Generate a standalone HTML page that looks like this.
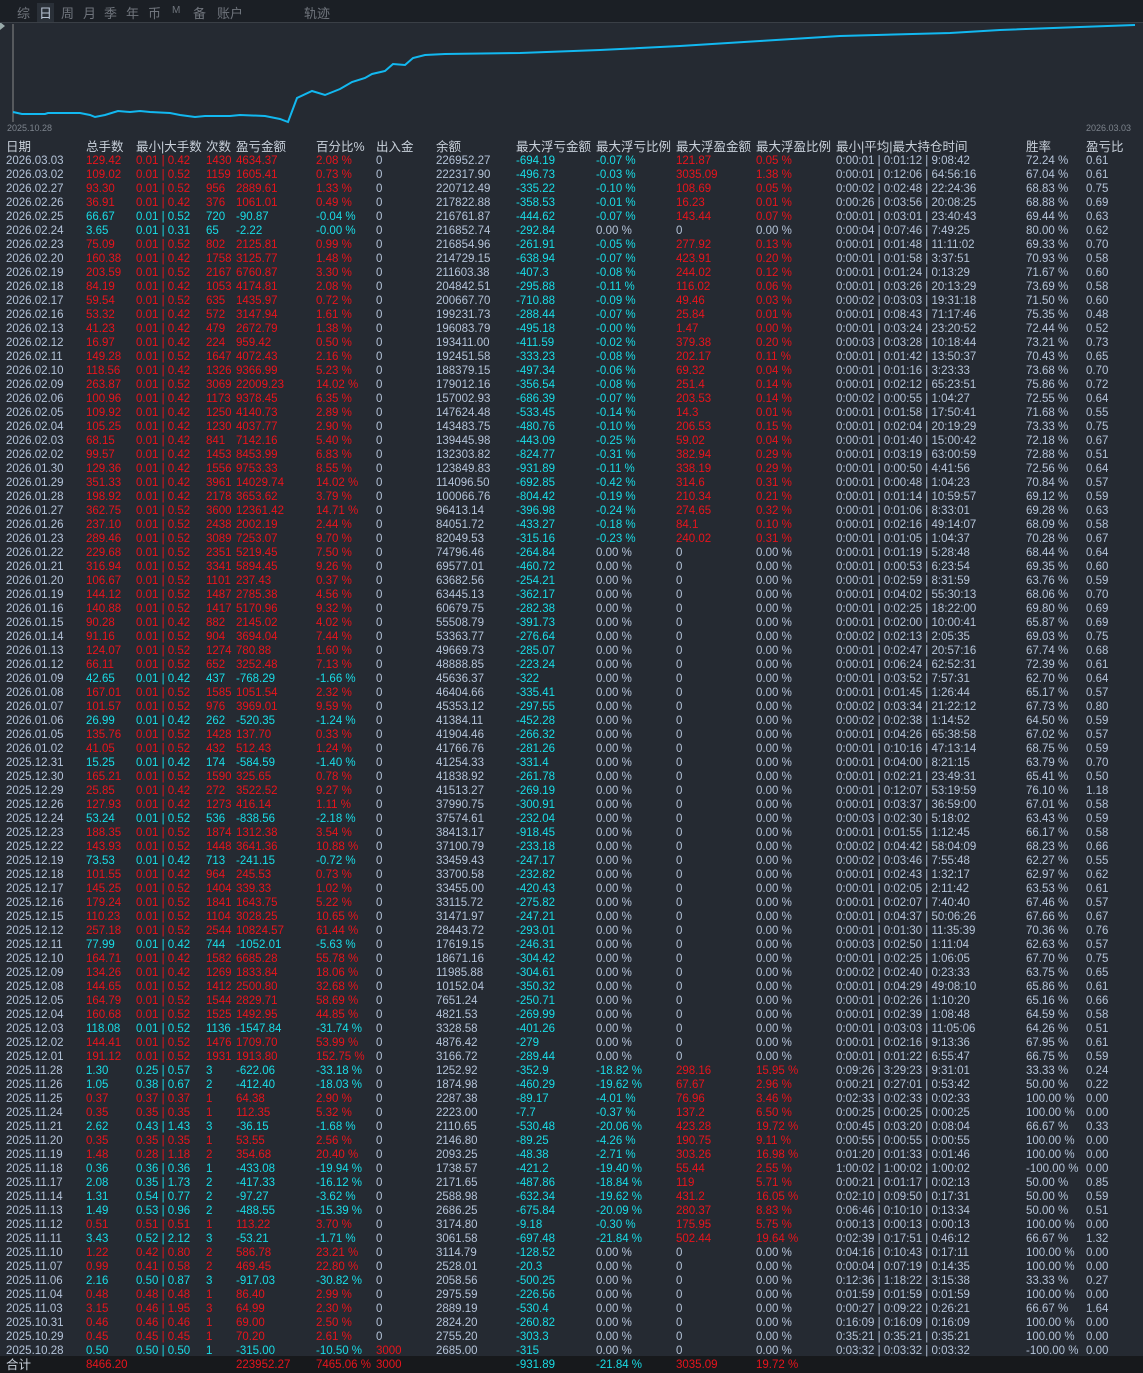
<!DOCTYPE html>
<html><head><meta charset="utf-8"><style>
body{margin:0;width:1143px;height:1373px;background:#252a32;overflow:hidden;font-family:"Liberation Sans","Noto Sans CJK SC",sans-serif;position:relative}
.top{position:absolute;left:0;top:0;width:1143px;height:22px;background:#1b1f25;color:#70757d;font-size:13px}
.top span{position:absolute;top:3px}
.tab{background:#2a3038;color:#b8c4d4}
.chart{position:absolute;left:0;top:22px;width:1143px;height:116px}
.dl{position:absolute;font-size:9px;color:#7d848d;top:123px}
table{position:absolute;left:0;top:140px;border-collapse:collapse;table-layout:fixed;font-size:11.5px;color:#b4c3d8}
td{padding:0;height:14px;line-height:14px;white-space:nowrap;overflow:visible}
tr.h td{font-size:12.5px;color:#c8d0da}
tr.p td:nth-child(n+2):nth-child(-n+6){color:#e8141c}
tr.n td:nth-child(n+2):nth-child(-n+6){color:#19dce6}
td:nth-child(9),td:nth-child(10){color:#19dce6}
td:nth-child(11),td:nth-child(12){color:#e8141c}
tr td.g{color:#b4c3d8}
tr td.r{color:#e8141c}
.foot{position:absolute;left:0;top:1356px;width:1143px;height:17px;background:#17191c}
</style></head><body>
<div class="top"><span style="left:17px">综</span><span class="tab" style="left:37px;padding:0 2px">日</span><span style="left:61px">周</span><span style="left:83px">月</span><span style="left:104px">季</span><span style="left:126px">年</span><span style="left:148px">币</span><span style="left:172px;font-size:10px;top:5px">M</span><span style="left:193px">备</span><span style="left:217px">账户</span><span style="left:304px">轨迹</span></div>
<div class="chart"><svg width="1143" height="116"><polygon points="0,0 5,4 0,8" fill="#9aa"/><line x1="13" y1="2" x2="13" y2="100" stroke="#888" stroke-width="1"/><line x1="0" y1="0.5" x2="1143" y2="0.5" stroke="#3a3f46"/>
<polyline fill="none" stroke="#12b8f0" stroke-width="2" points="13,90 22,92 45,92 48,91 80,91 90,93 95,95 105,93 118,89 130,90 140,89 150,90 170,91 180,93 195,95 205,94 230,94 240,93 265,94 280,97 288,100 297,76 312,69 325,73 340,67 352,60 365,56 372,52 385,49 393,42 405,43 413,36 425,33 445,32 520,31 600,28 680,24 760,19 840,14 950,11 1000,8 1080,5 1135,3"/></svg></div>
<div class="dl" style="left:7px">2025.10.28</div><div class="dl" style="left:1086px">2026.03.03</div>
<div class="foot"></div>
<table>
<colgroup><col style="width:86px"><col style="width:50px"><col style="width:70px"><col style="width:30px"><col style="width:80px"><col style="width:60px"><col style="width:60px"><col style="width:80px"><col style="width:80px"><col style="width:80px"><col style="width:80px"><col style="width:80px"><col style="width:190px"><col style="width:60px"><col style="width:57px"></colgroup>
<tr class="h"><td style="padding-left:6px">日期</td><td>总手数</td><td>最小|大手数</td><td>次数</td><td>盈亏金额</td><td>百分比%</td><td>出入金</td><td>余额</td><td style="color:#c8d0da">最大浮亏金额</td><td style="color:#c8d0da">最大浮亏比例</td><td style="color:#c8d0da">最大浮盈金额</td><td style="color:#c8d0da">最大浮盈比例</td><td>最小|平均|最大持仓时间</td><td>胜率</td><td>盈亏比</td></tr>
<tr class="p"><td style="padding-left:6px">2026.03.03</td><td>129.42</td><td>0.01 | 0.42</td><td>1430</td><td>4634.37</td><td>2.08 %</td><td>0</td><td>226952.27</td><td>-694.19</td><td>-0.07 %</td><td>121.87</td><td>0.05 %</td><td>0:00:01 | 0:01:12 | 9:08:42</td><td>72.24 %</td><td>0.61</td></tr>
<tr class="p"><td style="padding-left:6px">2026.03.02</td><td>109.02</td><td>0.01 | 0.52</td><td>1159</td><td>1605.41</td><td>0.73 %</td><td>0</td><td>222317.90</td><td>-496.73</td><td>-0.03 %</td><td>3035.09</td><td>1.38 %</td><td>0:00:01 | 0:12:06 | 64:56:16</td><td>67.04 %</td><td>0.61</td></tr>
<tr class="p"><td style="padding-left:6px">2026.02.27</td><td>93.30</td><td>0.01 | 0.52</td><td>956</td><td>2889.61</td><td>1.33 %</td><td>0</td><td>220712.49</td><td>-335.22</td><td>-0.10 %</td><td>108.69</td><td>0.05 %</td><td>0:00:02 | 0:02:48 | 22:24:36</td><td>68.83 %</td><td>0.75</td></tr>
<tr class="p"><td style="padding-left:6px">2026.02.26</td><td>36.91</td><td>0.01 | 0.42</td><td>376</td><td>1061.01</td><td>0.49 %</td><td>0</td><td>217822.88</td><td>-358.53</td><td>-0.01 %</td><td>16.23</td><td>0.01 %</td><td>0:00:26 | 0:03:56 | 20:08:25</td><td>68.88 %</td><td>0.69</td></tr>
<tr class="n"><td style="padding-left:6px">2026.02.25</td><td>66.67</td><td>0.01 | 0.52</td><td>720</td><td>-90.87</td><td>-0.04 %</td><td>0</td><td>216761.87</td><td>-444.62</td><td>-0.07 %</td><td>143.44</td><td>0.07 %</td><td>0:00:01 | 0:03:01 | 23:40:43</td><td>69.44 %</td><td>0.63</td></tr>
<tr class="n"><td style="padding-left:6px">2026.02.24</td><td>3.65</td><td>0.01 | 0.31</td><td>65</td><td>-2.22</td><td>-0.00 %</td><td>0</td><td>216852.74</td><td>-292.84</td><td class="g">0.00 %</td><td class="g">0</td><td class="g">0.00 %</td><td>0:00:04 | 0:07:46 | 7:49:25</td><td>80.00 %</td><td>0.62</td></tr>
<tr class="p"><td style="padding-left:6px">2026.02.23</td><td>75.09</td><td>0.01 | 0.52</td><td>802</td><td>2125.81</td><td>0.99 %</td><td>0</td><td>216854.96</td><td>-261.91</td><td>-0.05 %</td><td>277.92</td><td>0.13 %</td><td>0:00:01 | 0:01:48 | 11:11:02</td><td>69.33 %</td><td>0.70</td></tr>
<tr class="p"><td style="padding-left:6px">2026.02.20</td><td>160.38</td><td>0.01 | 0.42</td><td>1758</td><td>3125.77</td><td>1.48 %</td><td>0</td><td>214729.15</td><td>-638.94</td><td>-0.07 %</td><td>423.91</td><td>0.20 %</td><td>0:00:01 | 0:01:58 | 3:37:51</td><td>70.93 %</td><td>0.58</td></tr>
<tr class="p"><td style="padding-left:6px">2026.02.19</td><td>203.59</td><td>0.01 | 0.52</td><td>2167</td><td>6760.87</td><td>3.30 %</td><td>0</td><td>211603.38</td><td>-407.3</td><td>-0.08 %</td><td>244.02</td><td>0.12 %</td><td>0:00:01 | 0:01:24 | 0:13:29</td><td>71.67 %</td><td>0.60</td></tr>
<tr class="p"><td style="padding-left:6px">2026.02.18</td><td>84.19</td><td>0.01 | 0.42</td><td>1053</td><td>4174.81</td><td>2.08 %</td><td>0</td><td>204842.51</td><td>-295.88</td><td>-0.11 %</td><td>116.02</td><td>0.06 %</td><td>0:00:01 | 0:03:26 | 20:13:29</td><td>73.69 %</td><td>0.58</td></tr>
<tr class="p"><td style="padding-left:6px">2026.02.17</td><td>59.54</td><td>0.01 | 0.52</td><td>635</td><td>1435.97</td><td>0.72 %</td><td>0</td><td>200667.70</td><td>-710.88</td><td>-0.09 %</td><td>49.46</td><td>0.03 %</td><td>0:00:02 | 0:03:03 | 19:31:18</td><td>71.50 %</td><td>0.60</td></tr>
<tr class="p"><td style="padding-left:6px">2026.02.16</td><td>53.32</td><td>0.01 | 0.42</td><td>572</td><td>3147.94</td><td>1.61 %</td><td>0</td><td>199231.73</td><td>-288.44</td><td>-0.07 %</td><td>25.84</td><td>0.01 %</td><td>0:00:01 | 0:08:43 | 71:17:46</td><td>75.35 %</td><td>0.48</td></tr>
<tr class="p"><td style="padding-left:6px">2026.02.13</td><td>41.23</td><td>0.01 | 0.42</td><td>479</td><td>2672.79</td><td>1.38 %</td><td>0</td><td>196083.79</td><td>-495.18</td><td>-0.00 %</td><td>1.47</td><td>0.00 %</td><td>0:00:01 | 0:03:24 | 23:20:52</td><td>72.44 %</td><td>0.52</td></tr>
<tr class="p"><td style="padding-left:6px">2026.02.12</td><td>16.97</td><td>0.01 | 0.42</td><td>224</td><td>959.42</td><td>0.50 %</td><td>0</td><td>193411.00</td><td>-411.59</td><td>-0.02 %</td><td>379.38</td><td>0.20 %</td><td>0:00:03 | 0:03:28 | 10:18:44</td><td>73.21 %</td><td>0.73</td></tr>
<tr class="p"><td style="padding-left:6px">2026.02.11</td><td>149.28</td><td>0.01 | 0.52</td><td>1647</td><td>4072.43</td><td>2.16 %</td><td>0</td><td>192451.58</td><td>-333.23</td><td>-0.08 %</td><td>202.17</td><td>0.11 %</td><td>0:00:01 | 0:01:42 | 13:50:37</td><td>70.43 %</td><td>0.65</td></tr>
<tr class="p"><td style="padding-left:6px">2026.02.10</td><td>118.56</td><td>0.01 | 0.42</td><td>1326</td><td>9366.99</td><td>5.23 %</td><td>0</td><td>188379.15</td><td>-497.34</td><td>-0.06 %</td><td>69.32</td><td>0.04 %</td><td>0:00:01 | 0:01:16 | 3:23:33</td><td>73.68 %</td><td>0.70</td></tr>
<tr class="p"><td style="padding-left:6px">2026.02.09</td><td>263.87</td><td>0.01 | 0.52</td><td>3069</td><td>22009.23</td><td>14.02 %</td><td>0</td><td>179012.16</td><td>-356.54</td><td>-0.08 %</td><td>251.4</td><td>0.14 %</td><td>0:00:01 | 0:02:12 | 65:23:51</td><td>75.86 %</td><td>0.72</td></tr>
<tr class="p"><td style="padding-left:6px">2026.02.06</td><td>100.96</td><td>0.01 | 0.42</td><td>1173</td><td>9378.45</td><td>6.35 %</td><td>0</td><td>157002.93</td><td>-686.39</td><td>-0.07 %</td><td>203.53</td><td>0.14 %</td><td>0:00:02 | 0:00:55 | 1:04:27</td><td>72.55 %</td><td>0.64</td></tr>
<tr class="p"><td style="padding-left:6px">2026.02.05</td><td>109.92</td><td>0.01 | 0.42</td><td>1250</td><td>4140.73</td><td>2.89 %</td><td>0</td><td>147624.48</td><td>-533.45</td><td>-0.14 %</td><td>14.3</td><td>0.01 %</td><td>0:00:01 | 0:01:58 | 17:50:41</td><td>71.68 %</td><td>0.55</td></tr>
<tr class="p"><td style="padding-left:6px">2026.02.04</td><td>105.25</td><td>0.01 | 0.42</td><td>1230</td><td>4037.77</td><td>2.90 %</td><td>0</td><td>143483.75</td><td>-480.76</td><td>-0.10 %</td><td>206.53</td><td>0.15 %</td><td>0:00:01 | 0:02:04 | 20:19:29</td><td>73.33 %</td><td>0.75</td></tr>
<tr class="p"><td style="padding-left:6px">2026.02.03</td><td>68.15</td><td>0.01 | 0.42</td><td>841</td><td>7142.16</td><td>5.40 %</td><td>0</td><td>139445.98</td><td>-443.09</td><td>-0.25 %</td><td>59.02</td><td>0.04 %</td><td>0:00:01 | 0:01:40 | 15:00:42</td><td>72.18 %</td><td>0.67</td></tr>
<tr class="p"><td style="padding-left:6px">2026.02.02</td><td>99.57</td><td>0.01 | 0.42</td><td>1453</td><td>8453.99</td><td>6.83 %</td><td>0</td><td>132303.82</td><td>-824.77</td><td>-0.31 %</td><td>382.94</td><td>0.29 %</td><td>0:00:01 | 0:03:19 | 63:00:59</td><td>72.88 %</td><td>0.51</td></tr>
<tr class="p"><td style="padding-left:6px">2026.01.30</td><td>129.36</td><td>0.01 | 0.42</td><td>1556</td><td>9753.33</td><td>8.55 %</td><td>0</td><td>123849.83</td><td>-931.89</td><td>-0.11 %</td><td>338.19</td><td>0.29 %</td><td>0:00:01 | 0:00:50 | 4:41:56</td><td>72.56 %</td><td>0.64</td></tr>
<tr class="p"><td style="padding-left:6px">2026.01.29</td><td>351.33</td><td>0.01 | 0.42</td><td>3961</td><td>14029.74</td><td>14.02 %</td><td>0</td><td>114096.50</td><td>-692.85</td><td>-0.42 %</td><td>314.6</td><td>0.31 %</td><td>0:00:01 | 0:00:48 | 1:04:23</td><td>70.84 %</td><td>0.57</td></tr>
<tr class="p"><td style="padding-left:6px">2026.01.28</td><td>198.92</td><td>0.01 | 0.42</td><td>2178</td><td>3653.62</td><td>3.79 %</td><td>0</td><td>100066.76</td><td>-804.42</td><td>-0.19 %</td><td>210.34</td><td>0.21 %</td><td>0:00:01 | 0:01:14 | 10:59:57</td><td>69.12 %</td><td>0.59</td></tr>
<tr class="p"><td style="padding-left:6px">2026.01.27</td><td>362.75</td><td>0.01 | 0.52</td><td>3600</td><td>12361.42</td><td>14.71 %</td><td>0</td><td>96413.14</td><td>-396.98</td><td>-0.24 %</td><td>274.65</td><td>0.32 %</td><td>0:00:01 | 0:01:06 | 8:33:01</td><td>69.28 %</td><td>0.63</td></tr>
<tr class="p"><td style="padding-left:6px">2026.01.26</td><td>237.10</td><td>0.01 | 0.52</td><td>2438</td><td>2002.19</td><td>2.44 %</td><td>0</td><td>84051.72</td><td>-433.27</td><td>-0.18 %</td><td>84.1</td><td>0.10 %</td><td>0:00:01 | 0:02:16 | 49:14:07</td><td>68.09 %</td><td>0.58</td></tr>
<tr class="p"><td style="padding-left:6px">2026.01.23</td><td>289.46</td><td>0.01 | 0.52</td><td>3089</td><td>7253.07</td><td>9.70 %</td><td>0</td><td>82049.53</td><td>-315.16</td><td>-0.23 %</td><td>240.02</td><td>0.31 %</td><td>0:00:01 | 0:01:05 | 1:04:37</td><td>70.28 %</td><td>0.67</td></tr>
<tr class="p"><td style="padding-left:6px">2026.01.22</td><td>229.68</td><td>0.01 | 0.52</td><td>2351</td><td>5219.45</td><td>7.50 %</td><td>0</td><td>74796.46</td><td>-264.84</td><td class="g">0.00 %</td><td class="g">0</td><td class="g">0.00 %</td><td>0:00:01 | 0:01:19 | 5:28:48</td><td>68.44 %</td><td>0.64</td></tr>
<tr class="p"><td style="padding-left:6px">2026.01.21</td><td>316.94</td><td>0.01 | 0.52</td><td>3341</td><td>5894.45</td><td>9.26 %</td><td>0</td><td>69577.01</td><td>-460.72</td><td class="g">0.00 %</td><td class="g">0</td><td class="g">0.00 %</td><td>0:00:01 | 0:00:53 | 6:23:54</td><td>69.35 %</td><td>0.60</td></tr>
<tr class="p"><td style="padding-left:6px">2026.01.20</td><td>106.67</td><td>0.01 | 0.52</td><td>1101</td><td>237.43</td><td>0.37 %</td><td>0</td><td>63682.56</td><td>-254.21</td><td class="g">0.00 %</td><td class="g">0</td><td class="g">0.00 %</td><td>0:00:01 | 0:02:59 | 8:31:59</td><td>63.76 %</td><td>0.59</td></tr>
<tr class="p"><td style="padding-left:6px">2026.01.19</td><td>144.12</td><td>0.01 | 0.52</td><td>1487</td><td>2785.38</td><td>4.56 %</td><td>0</td><td>63445.13</td><td>-362.17</td><td class="g">0.00 %</td><td class="g">0</td><td class="g">0.00 %</td><td>0:00:01 | 0:04:02 | 55:30:13</td><td>68.06 %</td><td>0.70</td></tr>
<tr class="p"><td style="padding-left:6px">2026.01.16</td><td>140.88</td><td>0.01 | 0.52</td><td>1417</td><td>5170.96</td><td>9.32 %</td><td>0</td><td>60679.75</td><td>-282.38</td><td class="g">0.00 %</td><td class="g">0</td><td class="g">0.00 %</td><td>0:00:01 | 0:02:25 | 18:22:00</td><td>69.80 %</td><td>0.69</td></tr>
<tr class="p"><td style="padding-left:6px">2026.01.15</td><td>90.28</td><td>0.01 | 0.42</td><td>882</td><td>2145.02</td><td>4.02 %</td><td>0</td><td>55508.79</td><td>-391.73</td><td class="g">0.00 %</td><td class="g">0</td><td class="g">0.00 %</td><td>0:00:01 | 0:02:00 | 10:00:41</td><td>65.87 %</td><td>0.69</td></tr>
<tr class="p"><td style="padding-left:6px">2026.01.14</td><td>91.16</td><td>0.01 | 0.52</td><td>904</td><td>3694.04</td><td>7.44 %</td><td>0</td><td>53363.77</td><td>-276.64</td><td class="g">0.00 %</td><td class="g">0</td><td class="g">0.00 %</td><td>0:00:02 | 0:02:13 | 2:05:35</td><td>69.03 %</td><td>0.75</td></tr>
<tr class="p"><td style="padding-left:6px">2026.01.13</td><td>124.07</td><td>0.01 | 0.52</td><td>1274</td><td>780.88</td><td>1.60 %</td><td>0</td><td>49669.73</td><td>-285.07</td><td class="g">0.00 %</td><td class="g">0</td><td class="g">0.00 %</td><td>0:00:01 | 0:02:47 | 20:57:16</td><td>67.74 %</td><td>0.68</td></tr>
<tr class="p"><td style="padding-left:6px">2026.01.12</td><td>66.11</td><td>0.01 | 0.52</td><td>652</td><td>3252.48</td><td>7.13 %</td><td>0</td><td>48888.85</td><td>-223.24</td><td class="g">0.00 %</td><td class="g">0</td><td class="g">0.00 %</td><td>0:00:01 | 0:06:24 | 62:52:31</td><td>72.39 %</td><td>0.61</td></tr>
<tr class="n"><td style="padding-left:6px">2026.01.09</td><td>42.65</td><td>0.01 | 0.42</td><td>437</td><td>-768.29</td><td>-1.66 %</td><td>0</td><td>45636.37</td><td>-322</td><td class="g">0.00 %</td><td class="g">0</td><td class="g">0.00 %</td><td>0:00:01 | 0:03:52 | 7:57:31</td><td>62.70 %</td><td>0.64</td></tr>
<tr class="p"><td style="padding-left:6px">2026.01.08</td><td>167.01</td><td>0.01 | 0.52</td><td>1585</td><td>1051.54</td><td>2.32 %</td><td>0</td><td>46404.66</td><td>-335.41</td><td class="g">0.00 %</td><td class="g">0</td><td class="g">0.00 %</td><td>0:00:01 | 0:01:45 | 1:26:44</td><td>65.17 %</td><td>0.57</td></tr>
<tr class="p"><td style="padding-left:6px">2026.01.07</td><td>101.57</td><td>0.01 | 0.52</td><td>976</td><td>3969.01</td><td>9.59 %</td><td>0</td><td>45353.12</td><td>-297.55</td><td class="g">0.00 %</td><td class="g">0</td><td class="g">0.00 %</td><td>0:00:02 | 0:03:34 | 21:22:12</td><td>67.73 %</td><td>0.80</td></tr>
<tr class="n"><td style="padding-left:6px">2026.01.06</td><td>26.99</td><td>0.01 | 0.42</td><td>262</td><td>-520.35</td><td>-1.24 %</td><td>0</td><td>41384.11</td><td>-452.28</td><td class="g">0.00 %</td><td class="g">0</td><td class="g">0.00 %</td><td>0:00:02 | 0:02:38 | 1:14:52</td><td>64.50 %</td><td>0.59</td></tr>
<tr class="p"><td style="padding-left:6px">2026.01.05</td><td>135.76</td><td>0.01 | 0.52</td><td>1428</td><td>137.70</td><td>0.33 %</td><td>0</td><td>41904.46</td><td>-266.32</td><td class="g">0.00 %</td><td class="g">0</td><td class="g">0.00 %</td><td>0:00:01 | 0:04:26 | 65:38:58</td><td>67.02 %</td><td>0.57</td></tr>
<tr class="p"><td style="padding-left:6px">2026.01.02</td><td>41.05</td><td>0.01 | 0.52</td><td>432</td><td>512.43</td><td>1.24 %</td><td>0</td><td>41766.76</td><td>-281.26</td><td class="g">0.00 %</td><td class="g">0</td><td class="g">0.00 %</td><td>0:00:01 | 0:10:16 | 47:13:14</td><td>68.75 %</td><td>0.59</td></tr>
<tr class="n"><td style="padding-left:6px">2025.12.31</td><td>15.25</td><td>0.01 | 0.42</td><td>174</td><td>-584.59</td><td>-1.40 %</td><td>0</td><td>41254.33</td><td>-331.4</td><td class="g">0.00 %</td><td class="g">0</td><td class="g">0.00 %</td><td>0:00:01 | 0:04:00 | 8:21:15</td><td>63.79 %</td><td>0.70</td></tr>
<tr class="p"><td style="padding-left:6px">2025.12.30</td><td>165.21</td><td>0.01 | 0.52</td><td>1590</td><td>325.65</td><td>0.78 %</td><td>0</td><td>41838.92</td><td>-261.78</td><td class="g">0.00 %</td><td class="g">0</td><td class="g">0.00 %</td><td>0:00:01 | 0:02:21 | 23:49:31</td><td>65.41 %</td><td>0.50</td></tr>
<tr class="p"><td style="padding-left:6px">2025.12.29</td><td>25.85</td><td>0.01 | 0.42</td><td>272</td><td>3522.52</td><td>9.27 %</td><td>0</td><td>41513.27</td><td>-269.19</td><td class="g">0.00 %</td><td class="g">0</td><td class="g">0.00 %</td><td>0:00:01 | 0:12:07 | 53:19:59</td><td>76.10 %</td><td>1.18</td></tr>
<tr class="p"><td style="padding-left:6px">2025.12.26</td><td>127.93</td><td>0.01 | 0.42</td><td>1273</td><td>416.14</td><td>1.11 %</td><td>0</td><td>37990.75</td><td>-300.91</td><td class="g">0.00 %</td><td class="g">0</td><td class="g">0.00 %</td><td>0:00:01 | 0:03:37 | 36:59:00</td><td>67.01 %</td><td>0.58</td></tr>
<tr class="n"><td style="padding-left:6px">2025.12.24</td><td>53.24</td><td>0.01 | 0.52</td><td>536</td><td>-838.56</td><td>-2.18 %</td><td>0</td><td>37574.61</td><td>-232.04</td><td class="g">0.00 %</td><td class="g">0</td><td class="g">0.00 %</td><td>0:00:03 | 0:02:30 | 5:18:02</td><td>63.43 %</td><td>0.59</td></tr>
<tr class="p"><td style="padding-left:6px">2025.12.23</td><td>188.35</td><td>0.01 | 0.52</td><td>1874</td><td>1312.38</td><td>3.54 %</td><td>0</td><td>38413.17</td><td>-918.45</td><td class="g">0.00 %</td><td class="g">0</td><td class="g">0.00 %</td><td>0:00:01 | 0:01:55 | 1:12:45</td><td>66.17 %</td><td>0.58</td></tr>
<tr class="p"><td style="padding-left:6px">2025.12.22</td><td>143.93</td><td>0.01 | 0.52</td><td>1448</td><td>3641.36</td><td>10.88 %</td><td>0</td><td>37100.79</td><td>-233.18</td><td class="g">0.00 %</td><td class="g">0</td><td class="g">0.00 %</td><td>0:00:02 | 0:04:42 | 58:04:09</td><td>68.23 %</td><td>0.66</td></tr>
<tr class="n"><td style="padding-left:6px">2025.12.19</td><td>73.53</td><td>0.01 | 0.42</td><td>713</td><td>-241.15</td><td>-0.72 %</td><td>0</td><td>33459.43</td><td>-247.17</td><td class="g">0.00 %</td><td class="g">0</td><td class="g">0.00 %</td><td>0:00:02 | 0:03:46 | 7:55:48</td><td>62.27 %</td><td>0.55</td></tr>
<tr class="p"><td style="padding-left:6px">2025.12.18</td><td>101.55</td><td>0.01 | 0.42</td><td>964</td><td>245.53</td><td>0.73 %</td><td>0</td><td>33700.58</td><td>-232.82</td><td class="g">0.00 %</td><td class="g">0</td><td class="g">0.00 %</td><td>0:00:01 | 0:02:43 | 1:32:17</td><td>62.97 %</td><td>0.62</td></tr>
<tr class="p"><td style="padding-left:6px">2025.12.17</td><td>145.25</td><td>0.01 | 0.52</td><td>1404</td><td>339.33</td><td>1.02 %</td><td>0</td><td>33455.00</td><td>-420.43</td><td class="g">0.00 %</td><td class="g">0</td><td class="g">0.00 %</td><td>0:00:01 | 0:02:05 | 2:11:42</td><td>63.53 %</td><td>0.61</td></tr>
<tr class="p"><td style="padding-left:6px">2025.12.16</td><td>179.24</td><td>0.01 | 0.52</td><td>1841</td><td>1643.75</td><td>5.22 %</td><td>0</td><td>33115.72</td><td>-275.82</td><td class="g">0.00 %</td><td class="g">0</td><td class="g">0.00 %</td><td>0:00:01 | 0:02:07 | 7:40:40</td><td>67.46 %</td><td>0.57</td></tr>
<tr class="p"><td style="padding-left:6px">2025.12.15</td><td>110.23</td><td>0.01 | 0.52</td><td>1104</td><td>3028.25</td><td>10.65 %</td><td>0</td><td>31471.97</td><td>-247.21</td><td class="g">0.00 %</td><td class="g">0</td><td class="g">0.00 %</td><td>0:00:01 | 0:04:37 | 50:06:26</td><td>67.66 %</td><td>0.67</td></tr>
<tr class="p"><td style="padding-left:6px">2025.12.12</td><td>257.18</td><td>0.01 | 0.52</td><td>2544</td><td>10824.57</td><td>61.44 %</td><td>0</td><td>28443.72</td><td>-293.01</td><td class="g">0.00 %</td><td class="g">0</td><td class="g">0.00 %</td><td>0:00:01 | 0:01:30 | 11:35:39</td><td>70.36 %</td><td>0.76</td></tr>
<tr class="n"><td style="padding-left:6px">2025.12.11</td><td>77.99</td><td>0.01 | 0.42</td><td>744</td><td>-1052.01</td><td>-5.63 %</td><td>0</td><td>17619.15</td><td>-246.31</td><td class="g">0.00 %</td><td class="g">0</td><td class="g">0.00 %</td><td>0:00:03 | 0:02:50 | 1:11:04</td><td>62.63 %</td><td>0.57</td></tr>
<tr class="p"><td style="padding-left:6px">2025.12.10</td><td>164.71</td><td>0.01 | 0.42</td><td>1582</td><td>6685.28</td><td>55.78 %</td><td>0</td><td>18671.16</td><td>-304.42</td><td class="g">0.00 %</td><td class="g">0</td><td class="g">0.00 %</td><td>0:00:01 | 0:02:25 | 1:06:05</td><td>67.70 %</td><td>0.75</td></tr>
<tr class="p"><td style="padding-left:6px">2025.12.09</td><td>134.26</td><td>0.01 | 0.42</td><td>1269</td><td>1833.84</td><td>18.06 %</td><td>0</td><td>11985.88</td><td>-304.61</td><td class="g">0.00 %</td><td class="g">0</td><td class="g">0.00 %</td><td>0:00:02 | 0:02:40 | 0:23:33</td><td>63.75 %</td><td>0.65</td></tr>
<tr class="p"><td style="padding-left:6px">2025.12.08</td><td>144.65</td><td>0.01 | 0.52</td><td>1412</td><td>2500.80</td><td>32.68 %</td><td>0</td><td>10152.04</td><td>-350.32</td><td class="g">0.00 %</td><td class="g">0</td><td class="g">0.00 %</td><td>0:00:01 | 0:04:29 | 49:08:10</td><td>65.86 %</td><td>0.61</td></tr>
<tr class="p"><td style="padding-left:6px">2025.12.05</td><td>164.79</td><td>0.01 | 0.52</td><td>1544</td><td>2829.71</td><td>58.69 %</td><td>0</td><td>7651.24</td><td>-250.71</td><td class="g">0.00 %</td><td class="g">0</td><td class="g">0.00 %</td><td>0:00:01 | 0:02:26 | 1:10:20</td><td>65.16 %</td><td>0.66</td></tr>
<tr class="p"><td style="padding-left:6px">2025.12.04</td><td>160.68</td><td>0.01 | 0.52</td><td>1525</td><td>1492.95</td><td>44.85 %</td><td>0</td><td>4821.53</td><td>-269.99</td><td class="g">0.00 %</td><td class="g">0</td><td class="g">0.00 %</td><td>0:00:01 | 0:02:39 | 1:08:48</td><td>64.59 %</td><td>0.58</td></tr>
<tr class="n"><td style="padding-left:6px">2025.12.03</td><td>118.08</td><td>0.01 | 0.52</td><td>1136</td><td>-1547.84</td><td>-31.74 %</td><td>0</td><td>3328.58</td><td>-401.26</td><td class="g">0.00 %</td><td class="g">0</td><td class="g">0.00 %</td><td>0:00:01 | 0:03:03 | 11:05:06</td><td>64.26 %</td><td>0.51</td></tr>
<tr class="p"><td style="padding-left:6px">2025.12.02</td><td>144.41</td><td>0.01 | 0.52</td><td>1476</td><td>1709.70</td><td>53.99 %</td><td>0</td><td>4876.42</td><td>-279</td><td class="g">0.00 %</td><td class="g">0</td><td class="g">0.00 %</td><td>0:00:01 | 0:02:16 | 9:13:36</td><td>67.95 %</td><td>0.61</td></tr>
<tr class="p"><td style="padding-left:6px">2025.12.01</td><td>191.12</td><td>0.01 | 0.52</td><td>1931</td><td>1913.80</td><td>152.75 %</td><td>0</td><td>3166.72</td><td>-289.44</td><td class="g">0.00 %</td><td class="g">0</td><td class="g">0.00 %</td><td>0:00:01 | 0:01:22 | 6:55:47</td><td>66.75 %</td><td>0.59</td></tr>
<tr class="n"><td style="padding-left:6px">2025.11.28</td><td>1.30</td><td>0.25 | 0.57</td><td>3</td><td>-622.06</td><td>-33.18 %</td><td>0</td><td>1252.92</td><td>-352.9</td><td>-18.82 %</td><td>298.16</td><td>15.95 %</td><td>0:09:26 | 3:29:23 | 9:31:01</td><td>33.33 %</td><td>0.24</td></tr>
<tr class="n"><td style="padding-left:6px">2025.11.26</td><td>1.05</td><td>0.38 | 0.67</td><td>2</td><td>-412.40</td><td>-18.03 %</td><td>0</td><td>1874.98</td><td>-460.29</td><td>-19.62 %</td><td>67.67</td><td>2.96 %</td><td>0:00:21 | 0:27:01 | 0:53:42</td><td>50.00 %</td><td>0.22</td></tr>
<tr class="p"><td style="padding-left:6px">2025.11.25</td><td>0.37</td><td>0.37 | 0.37</td><td>1</td><td>64.38</td><td>2.90 %</td><td>0</td><td>2287.38</td><td>-89.17</td><td>-4.01 %</td><td>76.96</td><td>3.46 %</td><td>0:02:33 | 0:02:33 | 0:02:33</td><td>100.00 %</td><td>0.00</td></tr>
<tr class="p"><td style="padding-left:6px">2025.11.24</td><td>0.35</td><td>0.35 | 0.35</td><td>1</td><td>112.35</td><td>5.32 %</td><td>0</td><td>2223.00</td><td>-7.7</td><td>-0.37 %</td><td>137.2</td><td>6.50 %</td><td>0:00:25 | 0:00:25 | 0:00:25</td><td>100.00 %</td><td>0.00</td></tr>
<tr class="n"><td style="padding-left:6px">2025.11.21</td><td>2.62</td><td>0.43 | 1.43</td><td>3</td><td>-36.15</td><td>-1.68 %</td><td>0</td><td>2110.65</td><td>-530.48</td><td>-20.06 %</td><td>423.28</td><td>19.72 %</td><td>0:00:45 | 0:03:20 | 0:08:04</td><td>66.67 %</td><td>0.33</td></tr>
<tr class="p"><td style="padding-left:6px">2025.11.20</td><td>0.35</td><td>0.35 | 0.35</td><td>1</td><td>53.55</td><td>2.56 %</td><td>0</td><td>2146.80</td><td>-89.25</td><td>-4.26 %</td><td>190.75</td><td>9.11 %</td><td>0:00:55 | 0:00:55 | 0:00:55</td><td>100.00 %</td><td>0.00</td></tr>
<tr class="p"><td style="padding-left:6px">2025.11.19</td><td>1.48</td><td>0.28 | 1.18</td><td>2</td><td>354.68</td><td>20.40 %</td><td>0</td><td>2093.25</td><td>-48.38</td><td>-2.71 %</td><td>303.26</td><td>16.98 %</td><td>0:01:20 | 0:01:33 | 0:01:46</td><td>100.00 %</td><td>0.00</td></tr>
<tr class="n"><td style="padding-left:6px">2025.11.18</td><td>0.36</td><td>0.36 | 0.36</td><td>1</td><td>-433.08</td><td>-19.94 %</td><td>0</td><td>1738.57</td><td>-421.2</td><td>-19.40 %</td><td>55.44</td><td>2.55 %</td><td>1:00:02 | 1:00:02 | 1:00:02</td><td>-100.00 %</td><td>0.00</td></tr>
<tr class="n"><td style="padding-left:6px">2025.11.17</td><td>2.08</td><td>0.35 | 1.73</td><td>2</td><td>-417.33</td><td>-16.12 %</td><td>0</td><td>2171.65</td><td>-487.86</td><td>-18.84 %</td><td>119</td><td>5.71 %</td><td>0:00:21 | 0:01:17 | 0:02:13</td><td>50.00 %</td><td>0.85</td></tr>
<tr class="n"><td style="padding-left:6px">2025.11.14</td><td>1.31</td><td>0.54 | 0.77</td><td>2</td><td>-97.27</td><td>-3.62 %</td><td>0</td><td>2588.98</td><td>-632.34</td><td>-19.62 %</td><td>431.2</td><td>16.05 %</td><td>0:02:10 | 0:09:50 | 0:17:31</td><td>50.00 %</td><td>0.59</td></tr>
<tr class="n"><td style="padding-left:6px">2025.11.13</td><td>1.49</td><td>0.53 | 0.96</td><td>2</td><td>-488.55</td><td>-15.39 %</td><td>0</td><td>2686.25</td><td>-675.84</td><td>-20.09 %</td><td>280.37</td><td>8.83 %</td><td>0:06:46 | 0:10:10 | 0:13:34</td><td>50.00 %</td><td>0.51</td></tr>
<tr class="p"><td style="padding-left:6px">2025.11.12</td><td>0.51</td><td>0.51 | 0.51</td><td>1</td><td>113.22</td><td>3.70 %</td><td>0</td><td>3174.80</td><td>-9.18</td><td>-0.30 %</td><td>175.95</td><td>5.75 %</td><td>0:00:13 | 0:00:13 | 0:00:13</td><td>100.00 %</td><td>0.00</td></tr>
<tr class="n"><td style="padding-left:6px">2025.11.11</td><td>3.43</td><td>0.52 | 2.12</td><td>3</td><td>-53.21</td><td>-1.71 %</td><td>0</td><td>3061.58</td><td>-697.48</td><td>-21.84 %</td><td>502.44</td><td>19.64 %</td><td>0:02:39 | 0:17:51 | 0:46:12</td><td>66.67 %</td><td>1.32</td></tr>
<tr class="p"><td style="padding-left:6px">2025.11.10</td><td>1.22</td><td>0.42 | 0.80</td><td>2</td><td>586.78</td><td>23.21 %</td><td>0</td><td>3114.79</td><td>-128.52</td><td class="g">0.00 %</td><td class="g">0</td><td class="g">0.00 %</td><td>0:04:16 | 0:10:43 | 0:17:11</td><td>100.00 %</td><td>0.00</td></tr>
<tr class="p"><td style="padding-left:6px">2025.11.07</td><td>0.99</td><td>0.41 | 0.58</td><td>2</td><td>469.45</td><td>22.80 %</td><td>0</td><td>2528.01</td><td>-20.3</td><td class="g">0.00 %</td><td class="g">0</td><td class="g">0.00 %</td><td>0:00:04 | 0:07:19 | 0:14:35</td><td>100.00 %</td><td>0.00</td></tr>
<tr class="n"><td style="padding-left:6px">2025.11.06</td><td>2.16</td><td>0.50 | 0.87</td><td>3</td><td>-917.03</td><td>-30.82 %</td><td>0</td><td>2058.56</td><td>-500.25</td><td class="g">0.00 %</td><td class="g">0</td><td class="g">0.00 %</td><td>0:12:36 | 1:18:22 | 3:15:38</td><td>33.33 %</td><td>0.27</td></tr>
<tr class="p"><td style="padding-left:6px">2025.11.04</td><td>0.48</td><td>0.48 | 0.48</td><td>1</td><td>86.40</td><td>2.99 %</td><td>0</td><td>2975.59</td><td>-226.56</td><td class="g">0.00 %</td><td class="g">0</td><td class="g">0.00 %</td><td>0:01:59 | 0:01:59 | 0:01:59</td><td>100.00 %</td><td>0.00</td></tr>
<tr class="p"><td style="padding-left:6px">2025.11.03</td><td>3.15</td><td>0.46 | 1.95</td><td>3</td><td>64.99</td><td>2.30 %</td><td>0</td><td>2889.19</td><td>-530.4</td><td class="g">0.00 %</td><td class="g">0</td><td class="g">0.00 %</td><td>0:00:27 | 0:09:22 | 0:26:21</td><td>66.67 %</td><td>1.64</td></tr>
<tr class="p"><td style="padding-left:6px">2025.10.31</td><td>0.46</td><td>0.46 | 0.46</td><td>1</td><td>69.00</td><td>2.50 %</td><td>0</td><td>2824.20</td><td>-260.82</td><td class="g">0.00 %</td><td class="g">0</td><td class="g">0.00 %</td><td>0:16:09 | 0:16:09 | 0:16:09</td><td>100.00 %</td><td>0.00</td></tr>
<tr class="p"><td style="padding-left:6px">2025.10.29</td><td>0.45</td><td>0.45 | 0.45</td><td>1</td><td>70.20</td><td>2.61 %</td><td>0</td><td>2755.20</td><td>-303.3</td><td class="g">0.00 %</td><td class="g">0</td><td class="g">0.00 %</td><td>0:35:21 | 0:35:21 | 0:35:21</td><td>100.00 %</td><td>0.00</td></tr>
<tr class="n"><td style="padding-left:6px">2025.10.28</td><td>0.50</td><td>0.50 | 0.50</td><td>1</td><td>-315.00</td><td>-10.50 %</td><td class="r">3000</td><td>2685.00</td><td>-315</td><td class="g">0.00 %</td><td class="g">0</td><td class="g">0.00 %</td><td>0:03:32 | 0:03:32 | 0:03:32</td><td>-100.00 %</td><td>0.00</td></tr>
<tr class="p"><td style="padding-left:6px;font-size:12.5px;color:#c8d0da">合计</td><td>8466.20</td><td></td><td></td><td>223952.27</td><td>7465.06 %</td><td class="r">3000</td><td></td><td>-931.89</td><td>-21.84 %</td><td>3035.09</td><td>19.72 %</td><td></td><td></td><td></td></tr>
</table>
</body></html>
